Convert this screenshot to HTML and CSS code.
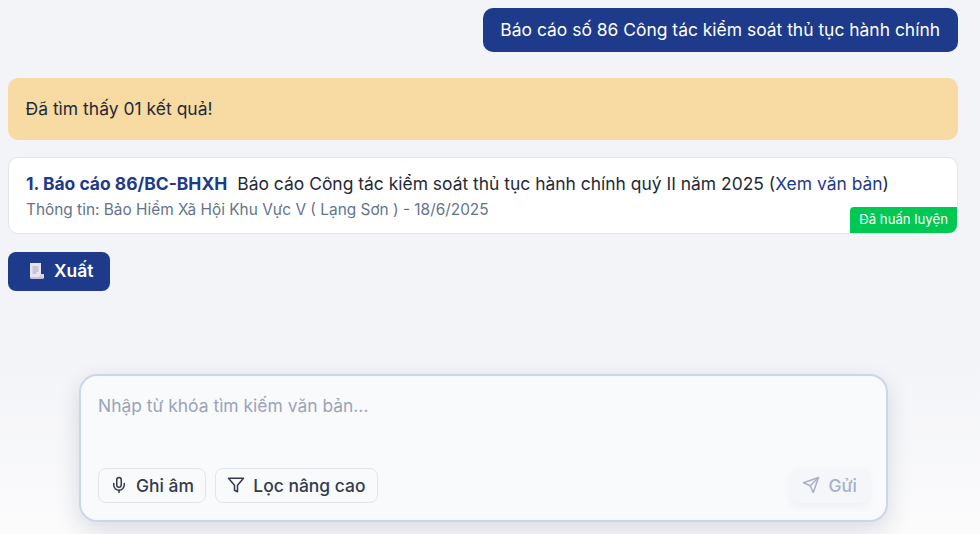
FILE: index.html
```html
<!DOCTYPE html>
<html>
<head>
    <title>Tra cứu văn bản</title>
    <link rel="stylesheet" href="styles.css">
</head>
<body>
    <div class="chat">
        <div class="user-row">
            <div class="user-bubble">Báo cáo số 86 Công tác kiểm soát thủ tục hành chính</div>
        </div>
        <div class="notice">Đã tìm thấy 01 kết quả!</div>
        <div class="result">
            <div class="result-title"><b>1. Báo cáo 86/BC-BHXH</b><span class="result-desc">Báo cáo Công tác kiểm soát thủ tục hành chính quý II năm 2025 (<a class="result-link" href="#">Xem văn bản</a>)</span></div>
            <div class="result-meta">Thông tin: Bảo Hiểm Xã Hội Khu Vực V ( Lạng Sơn ) - 18/6/2025</div>
            <span class="badge">Đã huấn luyện</span>
        </div>
        <button class="export">
            <svg class="export-icon" width="18" height="18" viewBox="0 0 18 18">
                <path d="M2 1h11v14H2z" fill="#e9e3f2"/>
                <path d="M13 12v3.6c0 .8.6 1.4 1.4 1.4H3.5C2.6 17 2 16.4 2 15.5V15h9z" fill="#c9bfe0"/>
                <path d="M13 12h3v3.6c0 .8-.7 1.4-1.5 1.4S13 16.4 13 15.6z" fill="#dcd5ea"/>
                <path d="M4.5 5h6M4.5 7h6M4.5 9h6M4.5 11h4" stroke="#a9a6bb" stroke-width="1" fill="none"/>
            </svg>
            Xuất
        </button>
    </div>

    <div class="composer">
        <div class="placeholder">Nhập từ khóa tìm kiếm văn bản...</div>
        <div class="composer-actions">
            <button class="tool-btn">
                <svg width="18" height="18" viewBox="0 0 24 24" fill="none" stroke="#333a4b" stroke-width="2" stroke-linecap="round" stroke-linejoin="round">
                    <path d="M12 2a3 3 0 0 0-3 3v7a3 3 0 0 0 6 0V5a3 3 0 0 0-3-3z"/>
                    <path d="M19 10v2a7 7 0 0 1-14 0v-2"/>
                    <path d="M12 19v3"/>
                </svg>
                Ghi âm
            </button>
            <button class="tool-btn">
                <svg width="18" height="18" viewBox="0 0 24 24" fill="none" stroke="#333a4b" stroke-width="2" stroke-linecap="round" stroke-linejoin="round">
                    <path d="M22 3H2l8 9.46V19l4 2v-8.54z"/>
                </svg>
                Lọc nâng cao
            </button>
            <button class="send-btn">
                <svg width="18" height="18" viewBox="0 0 24 24" fill="none" stroke="#a9b0c4" stroke-width="2" stroke-linecap="round" stroke-linejoin="round">
                    <path d="M22 2 11 13"/>
                    <path d="M22 2 15 22l-4-9-9-4z"/>
                </svg>
                Gửi
            </button>
        </div>
    </div>
</body>
</html>
```

FILE: styles.css
```css
html {
    height: 100%;
    margin: 0;
    padding: 0;
}

body {
    height: 534px;
    margin: 0;
    padding: 8px 22px 12px 8px;
    box-sizing: border-box;
    overflow: hidden;
    display: flex;
    flex-direction: column;
    font-family: Inter, "Liberation Sans", sans-serif;
    color: #1f2937;
    background: linear-gradient(180deg, #f3f4f8 0%, #f3f4f8 66%, #fbfbfc 100%);
}

.chat {
    display: flex;
    flex-direction: column;
    align-items: stretch;
}

.user-row {
    display: flex;
    justify-content: flex-end;
}

.user-bubble {
    background-color: #1e3a8a;
    color: #fff;
    font-size: 17.44px;
    line-height: 24px;
    padding: 10px 18px 10px 17px;
    border-radius: 10px;
}

.notice {
    margin-top: 26px;
    background-color: #f8dba3;
    border-radius: 10px;
    padding: 19px 18px 19px 17.5px;
    font-size: 17.5px;
    line-height: 24px;
    color: #1f2937;
}

.result {
    position: relative;
    margin-top: 17px;
    background-color: #fff;
    border: 1px solid #e2e4ea;
    border-radius: 10px;
    padding: 14px 18px 13px 17px;
    height: 77px;
    box-sizing: border-box;
}

.result-title {
    font-size: 17.44px;
    line-height: 24px;
}

.result-title b {
    font-weight: 700;
    color: #1e3a8a;
}

.result-desc {
    margin-left: 10px;
}

.result-link {
    color: #1e3a8a;
    text-decoration: none;
}

.result-meta {
    margin-top: 4px;
    font-size: 15.4px;
    line-height: 20px;
    color: #64748b;
}

.badge {
    position: absolute;
    right: 0;
    bottom: 0;
    background-color: #00c853;
    color: #fff;
    font-size: 13.2px;
    line-height: 25px;
    padding: 0 9px 1px;
    border-radius: 4px 0 8px 0;
}

.export {
    align-self: flex-start;
    margin-top: 18px;
    height: 39px;
    width: 102px;
    display: flex;
    align-items: center;
    gap: 8px;
    padding: 0 0 2px 20px;
    background-color: #1e3a8a;
    color: #fff;
    border: none;
    border-radius: 8px;
    font-family: inherit;
    font-size: 17.44px;
    font-weight: 600;
}

.composer {
    margin-top: auto;
    margin-left: 71px;
    width: 809px;
    height: 148px;
    box-sizing: border-box;
    background-color: #f9fafc;
    border: 2px solid #cdd6e8;
    border-radius: 18px;
    padding: 18px 17px 17px;
    display: flex;
    flex-direction: column;
    box-shadow: 0 8px 24px rgba(30, 41, 80, 0.15);
}

.placeholder {
    font-size: 17.44px;
    line-height: 24px;
    color: #9aa3b8;
}

.composer-actions {
    margin-top: auto;
    display: flex;
    align-items: center;
    gap: 9px;
}

.tool-btn {
    height: 35px;
    display: flex;
    align-items: center;
    gap: 8px;
    padding: 0 11.4px 1px 11px;
    background-color: #f9fafc;
    border: 1px solid #e2e5ec;
    border-radius: 8px;
    font-family: inherit;
    font-size: 17.44px;
    font-weight: 500;
    color: #333a4b;
}

.send-btn {
    margin-left: auto;
    height: 35px;
    display: flex;
    align-items: center;
    gap: 9px;
    padding: 0 12px 1px 11px;
    background-color: #f5f6fa;
    border: none;
    border-radius: 8px;
    font-family: inherit;
    font-size: 17.44px;
    font-weight: 500;
    color: #a9b0c4;
    box-shadow: 0 4px 10px rgba(30, 41, 80, 0.05);
}
```
